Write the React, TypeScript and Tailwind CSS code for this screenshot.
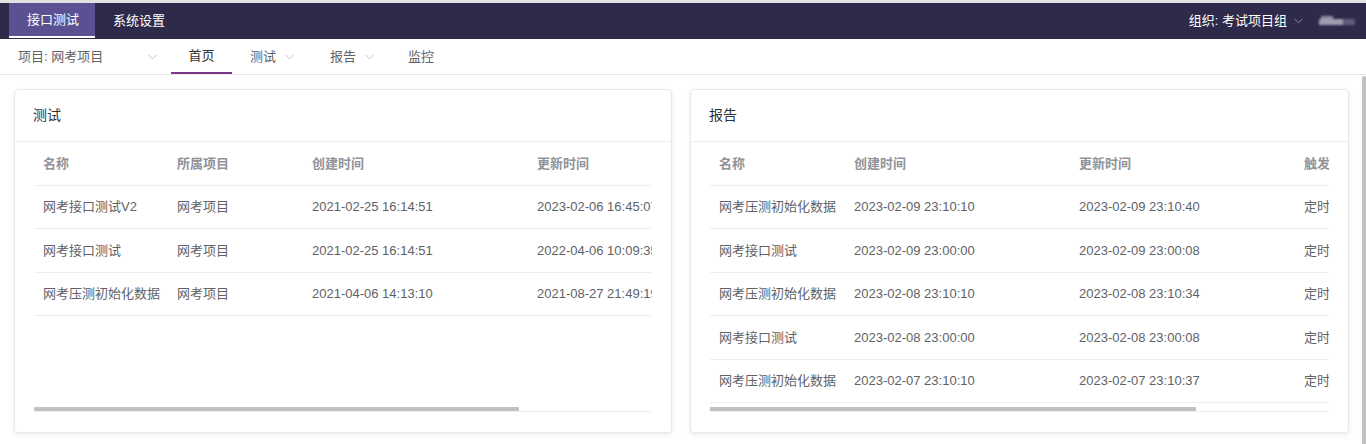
import React from "react";

const Chevron = ({ color = "#c0c4cc" }: { color?: string }) => (
  <svg width="9" height="6" viewBox="0 0 9 6" className="block">
    <path d="M0.5 0.8 L4.5 4.8 L8.5 0.8" fill="none" stroke={color} strokeWidth="1" />
  </svg>
);

type Col = { title: string; w: number };

const leftCols: Col[] = [
  { title: "名称", w: 134 },
  { title: "所属项目", w: 135 },
  { title: "创建时间", w: 225 },
  { title: "更新时间", w: 225 },
  { title: "", w: 68 },
];
const leftRows = [
  ["网考接口测试V2", "网考项目", "2021-02-25 16:14:51", "2023-02-06 16:45:07", ""],
  ["网考接口测试", "网考项目", "2021-02-25 16:14:51", "2022-04-06 10:09:35", ""],
  ["网考压测初始化数据", "网考项目", "2021-04-06 14:13:10", "2021-08-27 21:49:19", ""],
];

const rightCols: Col[] = [
  { title: "名称", w: 135 },
  { title: "创建时间", w: 225 },
  { title: "更新时间", w: 225 },
  { title: "触发方式", w: 202 },
];
const rightRows = [
  ["网考压测初始化数据", "2023-02-09 23:10:10", "2023-02-09 23:10:40", "定时任务"],
  ["网考接口测试", "2023-02-09 23:00:00", "2023-02-09 23:00:08", "定时任务"],
  ["网考压测初始化数据", "2023-02-08 23:10:10", "2023-02-08 23:10:34", "定时任务"],
  ["网考接口测试", "2023-02-08 23:00:00", "2023-02-08 23:00:08", "定时任务"],
  ["网考压测初始化数据", "2023-02-07 23:10:10", "2023-02-07 23:10:37", "定时任务"],
];

function Card({ title, cols, rows, w }: { title: string; cols: Col[]; rows: string[][]; w: string }) {
  return (
    <div className={`${w} shrink-0 h-[344px] flex flex-col bg-white border border-[#e6e9f0] rounded-[4px] shadow-[0_2px_5px_rgba(0,0,0,0.08)] min-w-0`}>
      <div className="h-[52px] shrink-0 border-b border-[#ebeef5] flex items-center px-[18px] text-[14px] text-[#303133]">
        {title}
      </div>
      <div className="flex-1 flex flex-col px-[19px] pb-[20px] min-h-0 min-w-0">
        <div className="flex-1 overflow-hidden min-h-0 min-w-0">
          <div className="w-[787px]">
            <div className="h-[44px] flex items-center border-b border-[#ebeef5] text-[13px] font-bold text-[#909399]">
              {cols.map((c, i) => (
                <div key={i} className="pl-[9px] shrink-0 whitespace-nowrap overflow-hidden" style={{ width: c.w }}>
                  {c.title}
                </div>
              ))}
            </div>
            {rows.map((r, ri) => (
              <div key={ri} className="h-[43.4px] flex items-center border-b border-[#ebeef5] text-[13px] text-[#606266]">
                {r.map((v, i) => (
                  <div key={i} className="pl-[9px] shrink-0 whitespace-nowrap overflow-hidden" style={{ width: cols[i].w }}>
                    {v}
                  </div>
                ))}
              </div>
            ))}
          </div>
        </div>
        <div className="relative h-[5px] shrink-0">
          <div className="absolute left-0 right-0 bottom-0 h-px bg-[#ebeef5]" />
          <div className="absolute left-0 top-0 h-[4px] w-[78.5%] bg-[#c1c1c1] rounded-[1px]" />
        </div>
      </div>
    </div>
  );
}

export default function App() {
  return (
    <div className="w-[1366px] h-[444px] overflow-hidden bg-white flex flex-col font-['Liberation_Sans','Noto_Sans_CJK_SC',sans-serif]">
      <div className="h-[3px] bg-[#e1e1e4] shrink-0" />
      <div className="h-[36px] bg-[#2d2a4a] flex items-start shrink-0 text-[13px] text-white">
        <div className="ml-[9px] w-[86px] h-[35px] bg-[#5b5192] border-b-2 border-white flex items-center pl-[18px]">
          接口测试
        </div>
        <div className="h-[35px] flex items-center pl-[18px]">系统设置</div>
        <div className="flex-1" />
        <div className="h-[35px] flex items-center">
          <span>组织: 考试项目组</span>
          <span className="ml-[7px]">
            <Chevron color="#8d8aa4" />
          </span>
          <div className="ml-[16px] w-[36px] h-[12px] relative blur-[1px]">
            <div className="absolute left-[2px] top-[1px] w-[12px] h-[3px] bg-[#8e8ba2]" />
            <div className="absolute left-0 top-[4px] w-[26px] h-[6px] bg-[#a09db2]" />
            <div className="absolute left-[24px] top-[4px] w-[12px] h-[6px] bg-[#5f5c78]" />
          </div>
          <div className="w-[11px]" />
        </div>
      </div>
      <div className="h-[36px] shrink-0 border-b border-[#e6e6e6] flex items-start text-[13px] text-[#606266]">
        <div className="w-[171px] h-[35px] flex items-center pl-[18px]">
          <span>项目: 网考项目</span>
          <span className="ml-[45px]">
            <Chevron />
          </span>
        </div>
        <div className="w-[61px] h-[35px] flex items-center justify-center border-b-2 border-[#783887] text-[#303133]">
          首页
        </div>
        <div className="w-[80px] h-[35px] flex items-center pl-[18px]">
          <span>测试</span>
          <span className="ml-[9px]">
            <Chevron />
          </span>
        </div>
        <div className="w-[78px] h-[35px] flex items-center pl-[18px]">
          <span>报告</span>
          <span className="ml-[9px]">
            <Chevron />
          </span>
        </div>
        <div className="h-[35px] flex items-center pl-[18px]">监控</div>
      </div>
      <div className="flex-1 flex min-h-0 min-w-0">
        <div className="flex-1 flex gap-[18px] pl-[14px] pr-[13px] pt-[14px] min-w-0">
          <Card title="测试" cols={leftCols} rows={leftRows} w="w-[658px]" />
          <Card title="报告" cols={rightCols} rows={rightRows} w="w-[659px]" />
        </div>
        <div className="w-[4px] shrink-0 bg-[#c1c1c1] rounded-t-[2px] mt-[1px]" />
      </div>
    </div>
  );
}
